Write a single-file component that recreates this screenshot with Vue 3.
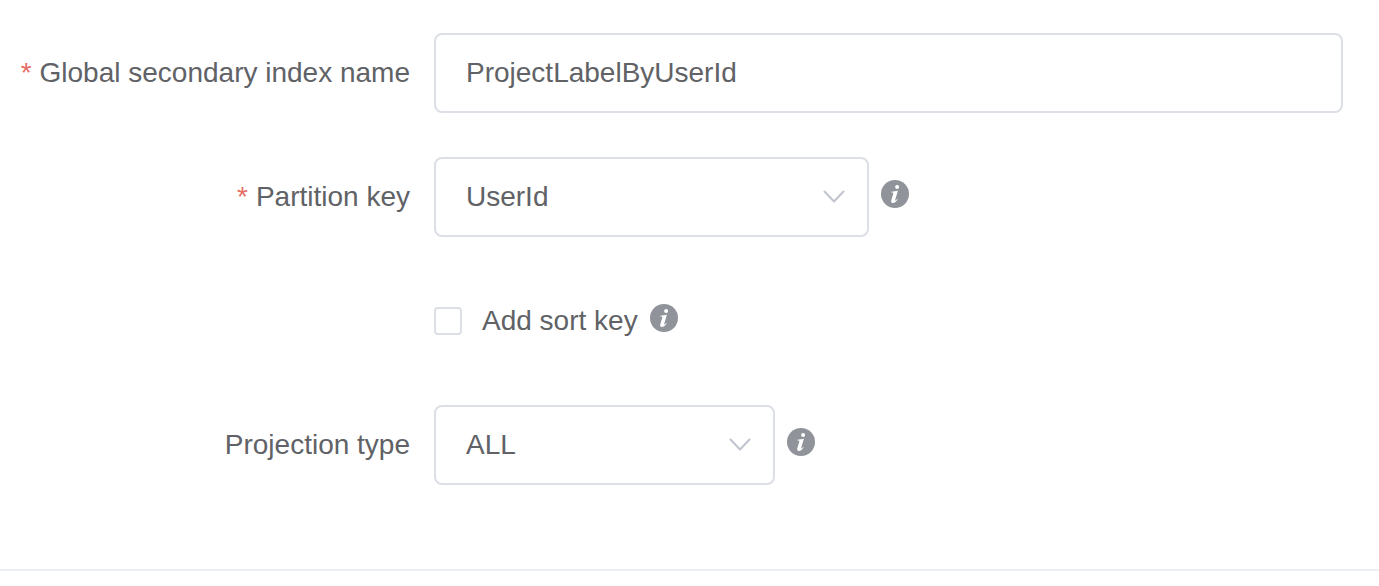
<script setup>
import { ref } from 'vue'

const indexName = ref('ProjectLabelByUserId')
const partitionKey = ref('UserId')
const projection = ref('ALL')
const addSortKey = ref(false)
const infoPath =
  'M14.1 7.1a2 2 0 1 1 4 0a2 2 0 0 1-4 0zM10.5 11.8L16.9 10.8L14.2 19.8C14 20.8 14.4 20.7 14.9 20.2L16 18.9L16.6 19.4C15 21.8 13.4 22.9 11.8 22.9C10.2 22.9 9.9 21.7 10.3 20.3L12.3 13.6C12.5 12.7 12.1 12.5 10.3 12.6Z'
</script>

<template>
  <form class="index-form" @submit.prevent>
    <div class="row">
      <label class="label required" for="index-name">Global secondary index name</label>
      <div class="content">
        <input id="index-name" v-model="indexName" class="control" type="text" />
      </div>
    </div>

    <div class="row">
      <label class="label required" for="partition-key">Partition key</label>
      <div class="content">
        <div class="select-box key-select">
          <select id="partition-key" v-model="partitionKey" class="control">
            <option>UserId</option>
          </select>
          <svg class="chevron" viewBox="0 0 24 14" aria-hidden="true"><path d="M2.5 1.5L12 11.5L21.5 1.5" /></svg>
        </div>
        <svg class="info" viewBox="0 0 28 28" aria-hidden="true">
          <circle cx="14" cy="14" r="14" /><path :d="infoPath" />
        </svg>
      </div>
    </div>

    <div class="row">
      <div class="content offset">
        <label class="check">
          <input v-model="addSortKey" type="checkbox" />
          <span>Add sort key</span>
        </label>
        <svg class="info" viewBox="0 0 28 28" aria-hidden="true">
          <circle cx="14" cy="14" r="14" /><path :d="infoPath" />
        </svg>
      </div>
    </div>

    <div class="row">
      <label class="label" for="projection-type">Projection type</label>
      <div class="content">
        <div class="select-box projection-select">
          <select id="projection-type" v-model="projection" class="control">
            <option>ALL</option>
          </select>
          <svg class="chevron" viewBox="0 0 24 14" aria-hidden="true"><path d="M2.5 1.5L12 11.5L21.5 1.5" /></svg>
        </div>
        <svg class="info" viewBox="0 0 28 28" aria-hidden="true">
          <circle cx="14" cy="14" r="14" /><path :d="infoPath" />
        </svg>
      </div>
    </div>
  </form>
</template>

<style>
body {
  background: #fff;
}
</style>

<style scoped>
.index-form {
  display: flex;
  flex-direction: column;
  gap: 44px;
  padding: 33px 36px 84px 0;
  border-bottom: 2px solid #ebeef5;
  color: #606266;
  font: 28px/32px "Liberation Sans", Arial, sans-serif;
}
.row {
  display: grid;
  grid-template-columns: 410px minmax(0, 1fr);
  column-gap: 24px;
  align-items: center;
  min-height: 80px;
}
.label {
  text-align: right;
  white-space: nowrap;
}
.required::before {
  content: "*";
  margin-right: 8px;
  color: #e56e66;
}
.content {
  display: flex;
  align-items: center;
  gap: 12px;
}
.offset {
  grid-column: 2;
}
.control {
  appearance: none;
  box-sizing: border-box;
  width: 100%;
  height: 80px;
  margin: 0;
  padding: 0 30px;
  border: 2px solid #dcdfe6;
  border-radius: 8px;
  outline: none;
  background: #fff;
  color: inherit;
  font: inherit;
}
.select-box {
  position: relative;
}
.key-select {
  flex: 0 1 435px;
}
.projection-select {
  flex: 0 1 341px;
}
.chevron {
  position: absolute;
  top: 33px;
  right: 23px;
  width: 24px;
  height: 14px;
  fill: none;
  stroke: #c0c4cc;
  stroke-width: 2;
  stroke-linecap: round;
  stroke-linejoin: round;
  pointer-events: none;
}
.info {
  flex: none;
  width: 28px;
  height: 28px;
  margin-bottom: 6px;
}
.info circle {
  fill: #909399;
}
.info path {
  fill: #fff;
}
.check {
  display: flex;
  align-items: center;
  gap: 20px;
}
.check input {
  appearance: none;
  box-sizing: border-box;
  width: 28px;
  height: 28px;
  margin: 0;
  border: 2px solid #dcdfe6;
  border-radius: 4px;
  background: #fff;
}
.check input:checked {
  border-color: #409eff;
  background: #409eff;
}
</style>
